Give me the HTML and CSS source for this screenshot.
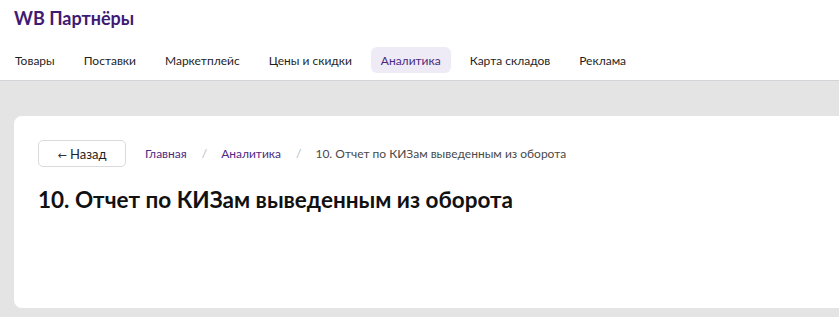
FILE: index.html
```html
<!DOCTYPE html>
<html lang="ru">
<head>
    <meta charset="utf-8">
    <title>WB Партнёры</title>
    <link rel="stylesheet" href="styles.css">
</head>
<body>
    <header class="header">
        <div class="logo">WB Партнёры</div>
        <nav class="menu">
            <a class="menu-item">Товары</a>
            <a class="menu-item">Поставки</a>
            <a class="menu-item">Маркетплейс</a>
            <a class="menu-item">Цены и скидки</a>
            <a class="menu-item active">Аналитика</a>
            <a class="menu-item">Карта складов</a>
            <a class="menu-item">Реклама</a>
        </nav>
    </header>

    <main class="content">
        <div class="card">
            <div class="crumbs-row">
                <button class="back-btn"><span class="arrow">&larr;</span> Назад</button>
                <div class="crumbs">
                    <a class="crumb-link">Главная</a>
                    <span class="sep">/</span>
                    <a class="crumb-link">Аналитика</a>
                    <span class="sep">/</span>
                    <span class="crumb-current">10. Отчет по КИЗам выведенным из оборота</span>
                </div>
            </div>
            <h1 class="title">10. Отчет по КИЗам выведенным из оборота</h1>
        </div>
    </main>
</body>
</html>
```

FILE: styles.css
```css
body {
    margin: 0;
    background-color: #e4e4e4;
    font-family: Lato, "Noto Sans", Arial, sans-serif;
    color: #1a1a1a;
}

.header {
    background-color: #fff;
    border-bottom: 1px solid #d4d4d8;
    height: 81px;
    box-sizing: border-box;
}

.logo {
    padding: 7px 0 0 14px;
    height: 32px;
    font-size: 18px;
    font-weight: 700;
    color: #3f1a72;
    line-height: 22px;
}

.menu {
    display: flex;
    gap: 9px;
    padding: 8px 0 0 5px;
}

.menu-item {
    display: block;
    padding: 0 10px;
    height: 26px;
    line-height: 27px;
    font-size: 12px;
    color: #1f1f1f;
    border-radius: 6px;
    cursor: pointer;
}

.menu-item.active {
    background-color: #efebf6;
    color: #4a2a80;
}

.content {
    padding: 35px 0 9px 14px;
}

.card {
    background-color: #fff;
    border-radius: 8px 0 0 8px;
    height: 192px;
    box-sizing: border-box;
    padding: 24px 24px;
}

.crumbs-row {
    display: flex;
    align-items: center;
}

.back-btn {
    width: 88px;
    height: 27px;
    border: 1px solid #d9d9de;
    border-radius: 5px;
    background: #fff;
    font-family: inherit;
    font-size: 13px;
    color: #1f1f1f;
    padding: 0;
    cursor: pointer;
}

.arrow {
    font-family: "DejaVu Sans", sans-serif;
    font-size: 11px;
    color: #333;
}

.crumbs {
    display: flex;
    align-items: center;
    margin-left: 19px;
    font-size: 12px;
}

.crumb-link {
    color: #4d2a85;
    cursor: pointer;
}

.sep {
    color: #b8b8c0;
    margin: 0 14px 0 15px;
}

.crumb-current {
    color: #4a4a4a;
}

.title {
    margin: 20px 0 0;
    font-size: 22.5px;
    font-weight: 700;
    color: #111;
    line-height: 26px;
}
```
